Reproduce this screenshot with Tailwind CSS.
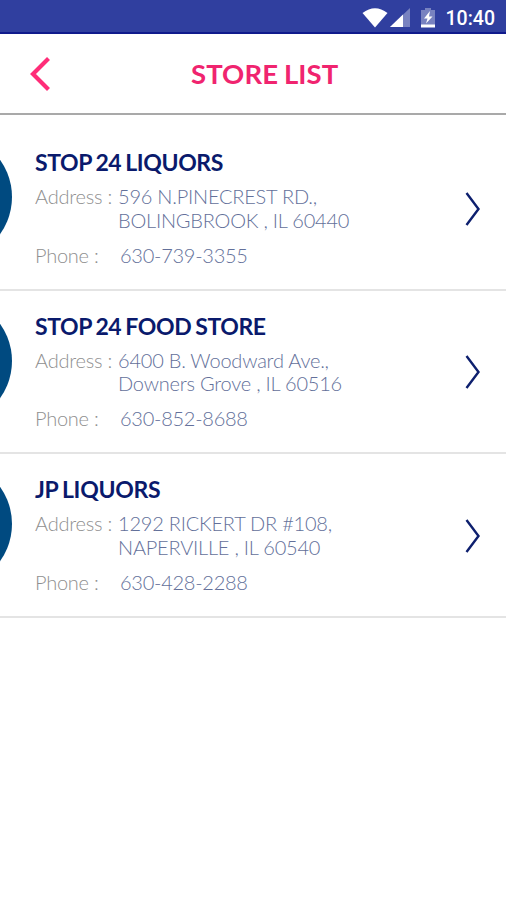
<!DOCTYPE html>
<html lang="en">
<head>
    <meta charset="UTF-8">
    <meta name="viewport" content="width=device-width, initial-scale=1.0">
    <title>Store List</title>
    <script src="https://cdn.jsdelivr.net/npm/@tailwindcss/browser@4"></script>
</head>
<body class="bg-white h-[900px] overflow-hidden font-['Lato',sans-serif]">

<!-- Status bar -->
<div class="h-[34px] bg-[#303f9f] border-b-2 border-[#101a8c] flex items-center justify-end pr-[11px] text-white">
    <svg class="w-[26px] h-5 mt-[3px]" viewBox="0 0 26 20" fill="currentColor">
        <path d="M0.5 5 Q13 -4.500 25.500 5 L13 19.500 Z"/>
    </svg>
    <svg class="w-5 h-5 ml-[2px] mt-[3px]" viewBox="0 0 20 20" fill="currentColor">
        <path d="M0 19 L20 0 V19 Z" opacity="0.35"/>
        <path d="M0 19 L13 6.500 V19 Z"/>
    </svg>
    <svg class="w-[14px] h-5 ml-[11px] mt-[3px]" viewBox="0 0 14 20" fill="currentColor">
        <path d="M0 2 H4 V0 H10 V2 H14 V17 H0 Z" opacity="0.35"/>
        <path d="M0 16.500 H14 V19.500 H0 Z"/>
        <path d="M9 3 L3 10.500 H6.500 L5 15.500 L11.500 8.500 H8 Z"/>
    </svg>
    <span class="ml-[11px] mt-[5px] font-['Roboto',sans-serif] font-medium text-[19.500px] leading-none">10:40</span>
</div>

<!-- Header -->
<header class="h-[81px] border-b-2 border-[#a9a9a9] flex items-center">
    <svg class="w-5 h-[34px] ml-[30px]" viewBox="0 0 20 34" fill="none" stroke="#ff2d78" stroke-width="4.200">
        <path d="M18.500 1.500 L3 17 L18.500 32.500"/>
    </svg>
    <h1 class="ml-[141px] text-[#f0246f] font-bold text-[27.500px] tracking-[0.1px] [word-spacing:-1px] leading-none whitespace-nowrap">STORE LIST</h1>
</header>

<!-- Stores -->
<main class="pt-[12px]">

    <section class="h-[163.5px] border-b-2 border-[#e4e4e4] flex overflow-hidden">
        <div class="w-[128px] h-[128px] ml-[-116px] mt-[6px] rounded-full bg-[#004a80] shrink-0"></div>
        <div class="ml-[23px] pt-[21px] w-[425px] whitespace-nowrap shrink-0">
            <h2 class="text-[#0a1a6c] font-bold text-[23px] tracking-[-0.4px] [word-spacing:-1.2px] leading-7"><span>STOP 24 LIQUORS</span></h2>
            <div class="flex mt-[9px] font-light text-[20px] tracking-[-0.22px] leading-[23.5px]">
                <div class="w-[83px] text-[#8f8f8f]"><span>Address :</span></div>
                <div class="text-[#63709a]"><span>596 N.PINECREST RD.,</span><br><span>BOLINGBROOK , IL 60440</span></div>
            </div>
            <div class="flex mt-[10.5px] font-light text-[20px] tracking-[-0.26px] leading-[24px]">
                <div class="w-[85px] text-[#8f8f8f]"><span>Phone :</span></div>
                <div class="text-[#63709a]"><span>630-739-3355</span></div>
            </div>
        </div>
        <svg class="w-4 h-9 ml-[5px] mt-[64px] shrink-0" viewBox="0 0 16 36" fill="none" stroke="#0d1f6e" stroke-width="2.400">
            <path d="M1.500 2 L13.500 18 L1.500 34"/>
        </svg>
    </section>

    <section class="h-[163.5px] border-b-2 border-[#e4e4e4] flex overflow-hidden">
        <div class="w-[128px] h-[128px] ml-[-116px] mt-[6px] rounded-full bg-[#004a80] shrink-0"></div>
        <div class="ml-[23px] pt-[21px] w-[425px] whitespace-nowrap shrink-0">
            <h2 class="text-[#0a1a6c] font-bold text-[23px] tracking-[-0.4px] [word-spacing:-1.2px] leading-7"><span>STOP 24 FOOD STORE</span></h2>
            <div class="flex mt-[9px] font-light text-[20px] tracking-[-0.22px] leading-[23.5px]">
                <div class="w-[83px] text-[#8f8f8f]"><span>Address :</span></div>
                <div class="text-[#63709a]"><span>6400 B. Woodward Ave.,</span><br><span>Downers Grove , IL 60516</span></div>
            </div>
            <div class="flex mt-[10.5px] font-light text-[20px] tracking-[-0.26px] leading-[24px]">
                <div class="w-[85px] text-[#8f8f8f]"><span>Phone :</span></div>
                <div class="text-[#63709a]"><span>630-852-8688</span></div>
            </div>
        </div>
        <svg class="w-4 h-9 ml-[5px] mt-[63.5px] shrink-0" viewBox="0 0 16 36" fill="none" stroke="#0d1f6e" stroke-width="2.400">
            <path d="M1.500 2 L13.500 18 L1.500 34"/>
        </svg>
    </section>

    <section class="h-[163.5px] border-b-2 border-[#e4e4e4] flex overflow-hidden">
        <div class="w-[128px] h-[128px] ml-[-116px] mt-[6px] rounded-full bg-[#004a80] shrink-0"></div>
        <div class="ml-[23px] pt-[21px] w-[425px] whitespace-nowrap shrink-0">
            <h2 class="text-[#0a1a6c] font-bold text-[23px] tracking-[-0.3px] [word-spacing:-1.2px] leading-7"><span>JP LIQUORS</span></h2>
            <div class="flex mt-[9px] font-light text-[20px] tracking-[-0.22px] leading-[23.5px]">
                <div class="w-[83px] text-[#8f8f8f]"><span>Address :</span></div>
                <div class="text-[#63709a]"><span>1292 RICKERT DR #108,</span><br><span>NAPERVILLE , IL 60540</span></div>
            </div>
            <div class="flex mt-[10.5px] font-light text-[20px] tracking-[-0.26px] leading-[24px]">
                <div class="w-[85px] text-[#8f8f8f]"><span>Phone :</span></div>
                <div class="text-[#63709a]"><span>630-428-2288</span></div>
            </div>
        </div>
        <svg class="w-4 h-9 ml-[5px] mt-[64px] shrink-0" viewBox="0 0 16 36" fill="none" stroke="#0d1f6e" stroke-width="2.400">
            <path d="M1.500 2 L13.500 18 L1.500 34"/>
        </svg>
    </section>

</main>
</body>
</html>
